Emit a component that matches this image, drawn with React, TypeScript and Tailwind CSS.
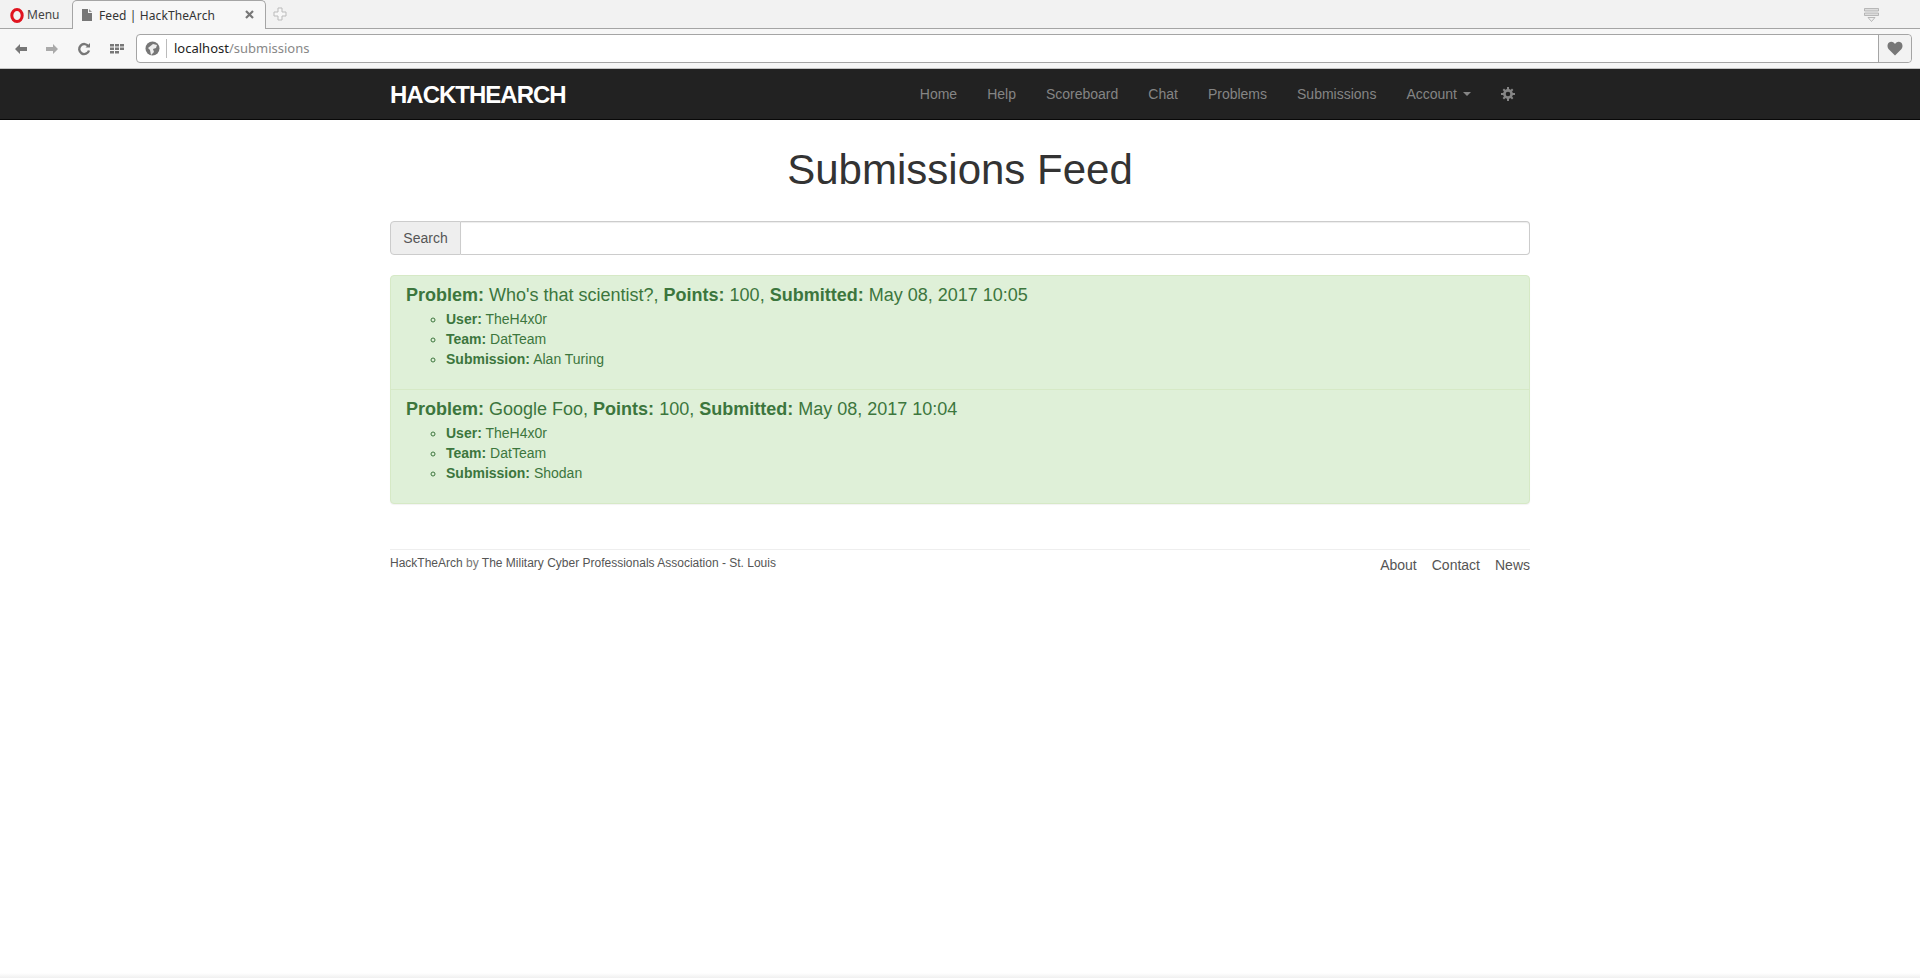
const navItems = ["Home", "Help", "Scoreboard", "Chat", "Problems", "Submissions"]

const submissions = [
  { problem: "Who's that scientist?", points: 100, time: "May 08, 2017 10:05", user: "TheH4x0r", team: "DatTeam", answer: "Alan Turing" },
  { problem: "Google Foo", points: 100, time: "May 08, 2017 10:04", user: "TheH4x0r", team: "DatTeam", answer: "Shodan" },
]

function TabBar() {
  return (
    <div className="h-[29px] bg-[#f2f2f2] flex items-end border-b border-[#a5a5a5] relative font-['Noto_Sans',sans-serif]">
      <div className="w-[72px] h-[28px] flex items-center pl-[10px] gap-[3px] text-[12px] text-[#444] pt-[2px]">
        <svg width="14" height="15" viewBox="0 0 14 15">
          <ellipse cx="7" cy="7.500" rx="5.200" ry="6" fill="none" stroke="#e0141f" strokeWidth="3" />
        </svg>
        Menu
      </div>
      <div className="w-[194px] h-[29px] mb-[-1px] bg-[#f7f7f7] border border-b-0 border-[#a5a5a5] rounded-t-[5px] flex items-center pl-[9px] pr-[9px] text-[12px] tracking-[0.1px] text-[#333] pt-[1px]">
        <svg width="11" height="12" viewBox="0 0 11 12" className="mr-[6px] mb-[2px]">
          <path d="M0 0h6v4h4v8H0z" fill="#777" />
          <path d="M7 0l3 3H7z" fill="#999" />
        </svg>
        <span className="flex-1">Feed | HackTheArch</span>
        <svg width="9" height="9" viewBox="0 0 9 9" className="mr-[2px] mb-[2px]">
          <path d="M1 1l7 7M8 1l-7 7" stroke="#777" strokeWidth="2.200" />
        </svg>
      </div>
      <svg width="14" height="14" viewBox="0 0 14 14" className="ml-[7px] mb-[7px]">
        <path d="M5 1h4v4h4v4H9v4H5V9H1V5h4z" fill="#f7f7f7" stroke="#bbb" />
      </svg>
      <svg width="15" height="14" viewBox="0 0 15 14" className="absolute right-[41px] top-[8px]">
        <path d="M.500 .500h14v2.500H.500zM.500 5h14v2.500H.500z" fill="#ddd" stroke="#aaa" strokeWidth="0.800" />
        <path d="M4 9.500h7l-3.500 4z" fill="#eee" stroke="#aaa" strokeWidth="0.800" />
      </svg>
    </div>
  )
}

function ToolBar() {
  return (
    <div className="h-[40px] bg-[#f7f7f7] flex items-center border-b border-[#c4c4c4] font-['Noto_Sans',sans-serif]">
      <div className="w-[136px] flex items-center shrink-0">
        <svg width="14" height="12" viewBox="0 0 14 12" className="ml-[14px]">
          <path d="M6 1L1 6l5 5V8h7V4H6z" fill="#777" />
        </svg>
        <svg width="14" height="12" viewBox="0 0 14 12" className="ml-[17px]">
          <path d="M8 1l5 5-5 5V8H1V4h7z" fill="#aaa" />
        </svg>
        <svg width="14" height="14" viewBox="0 0 14 14" className="ml-[18px]">
          <path d="M11.500 4.500A5 5 0 1 0 12 8.500" fill="none" stroke="#777" strokeWidth="2.400" />
          <path d="M8.500 5.500H13V1z" fill="#777" />
        </svg>
        <svg width="14" height="12" viewBox="0 0 14 12" className="ml-[19px]">
          <path d="M0 1h4v2.500H0zM5 1h4v2.500H5zM10 1h4v2.500h-4zM0 4.500h4V7H0zM5 4.500h4V7H5zM10 4.500h4V7h-4zM0 8h4v2.500H0zM5 8h4v2.500H5z" fill="#777" />
        </svg>
      </div>
      <div className="flex-1 h-[29px] mr-[8px] flex items-center bg-white border border-[#a5a5a5] rounded-[4px]">
        <div className="w-[30px] h-[19px] flex items-center justify-center border-r border-[#bbb] shrink-0">
          <svg width="15" height="15" viewBox="0 0 15 15" className="ml-[2px]">
            <circle cx="7.500" cy="7.500" r="7" fill="#777" />
            <path d="M8 3l4 1-1 3-3 1 1 3-3 3-1-5-2-2z" fill="#eee" />
          </svg>
        </div>
        <div className="flex-1 pl-[7px] text-[13px] text-[#222]">
          localhost<span className="text-[#888]">/submissions</span>
        </div>
        <div className="w-[33px] h-full flex items-center justify-center border-l border-[#a5a5a5] bg-[#f2f2f2] rounded-r-[4px]">
          <svg width="16" height="15" viewBox="0 0 16 15">
            <path d="M8 14.500L1.500 8C-.500 5.500.500 1 4 .800 6 .700 7.300 1.800 8 3 8.700 1.800 10 .700 12 .800c3.500.200 4.500 4.700 2.500 7.200z" fill="#777" />
          </svg>
        </div>
      </div>
    </div>
  )
}

function Navbar() {
  return (
    <nav className="h-[51px] bg-[#222] border-b border-[#080808]">
      <div className="w-[1140px] mx-auto flex items-center h-[50px]">
        <span className="text-[24px] font-bold tracking-[-1px] text-white pt-[1px]">HACKTHEARCH</span>
        <div className="ml-auto flex items-center text-[14px] text-[#858585] gap-[30px] pr-[15px]">
          {navItems.map((item) => (
            <span key={item}>{item}</span>
          ))}
          <span className="flex items-center">
            Account
            <span className="ml-[6px] border-x-4 border-t-4 border-x-transparent border-t-[#858585]" />
          </span>
          <svg width="14" height="14" viewBox="0 0 14 14">
            <circle cx="7" cy="7" r="3.600" fill="none" stroke="#858585" strokeWidth="2.600" />
            <path d="M6 0h2v3H6zM6 11h2v3H6zM0 6h3v2H0zM11 6h3v2h-3zM1.600 3l1.400-1.400 2 2L3.600 5zM9 10.400L10.400 9l2 2-1.400 1.400zM3 12.400L1.600 11l2-2L5 10.400zM10.400 5L9 3.600l2-2L12.400 3z" fill="#858585" />
          </svg>
        </div>
      </div>
    </nav>
  )
}

function SubmissionItem({ item, first }: { item: (typeof submissions)[number]; first: boolean }) {
  return (
    <div className={`px-[15px] pt-[9px] ${first ? "h-[113px]" : "h-[114px] border-t border-[#d6e9c6]"}`}>
      <div className="text-[18px] leading-[20px]">
        <b>Problem:</b> {item.problem}, <b>Points:</b> {item.points}, <b>Submitted:</b> {item.time}
      </div>
      <ul className="mt-[4px] pl-[40px] list-[circle] text-[14px] leading-[20px]">
        <li><b>User:</b> {item.user}</li>
        <li><b>Team:</b> {item.team}</li>
        <li><b>Submission:</b> {item.answer}</li>
      </ul>
    </div>
  )
}

export default function App() {
  return (
    <div className="min-h-[978px] relative bg-white font-['Liberation_Sans',sans-serif] text-[#333]">
      <TabBar />
      <ToolBar />
      <Navbar />
      <main className="w-[1140px] mx-auto">
        <h1 className="text-center text-[42px] leading-[46px] pt-[27px] mb-[28px]">Submissions Feed</h1>
        <div className="flex h-[34px] text-[14px]">
          <div className="w-[71px] flex items-center justify-center bg-[#eee] border border-[#ccc] rounded-l-[4px] text-[#555]">Search</div>
          <input className="flex-1 border border-l-0 border-[#ccc] rounded-r-[4px] shadow-[inset_0_1px_1px_rgba(0,0,0,0.075)]" />
        </div>
        <div className="mt-[20px] bg-[#dff0d8] border border-[#d6e9c6] rounded-[4px] text-[#3c763d] shadow-[0_1px_1px_rgba(0,0,0,0.05)]">
          {submissions.map((item, i) => (
            <SubmissionItem key={item.problem} item={item} first={i === 0} />
          ))}
        </div>
        <footer className="mt-[45px] border-t border-[#eee] flex justify-between">
          <p className="text-[12px] leading-[17px] pt-[5px] text-[#777]">
            <span className="text-[#555]">HackTheArch</span> by <span className="text-[#555]">The Military Cyber Professionals Association - St. Louis</span>
          </p>
          <div className="flex gap-[15px] text-[14px] leading-[20px] pt-[5px] text-[#555]">
            <span>About</span>
            <span>Contact</span>
            <span>News</span>
          </div>
        </footer>
      </main>
      <div className="absolute bottom-0 inset-x-0 h-[5px] bg-gradient-to-b from-transparent to-[#f0f0f0]" />
    </div>
  )
}
